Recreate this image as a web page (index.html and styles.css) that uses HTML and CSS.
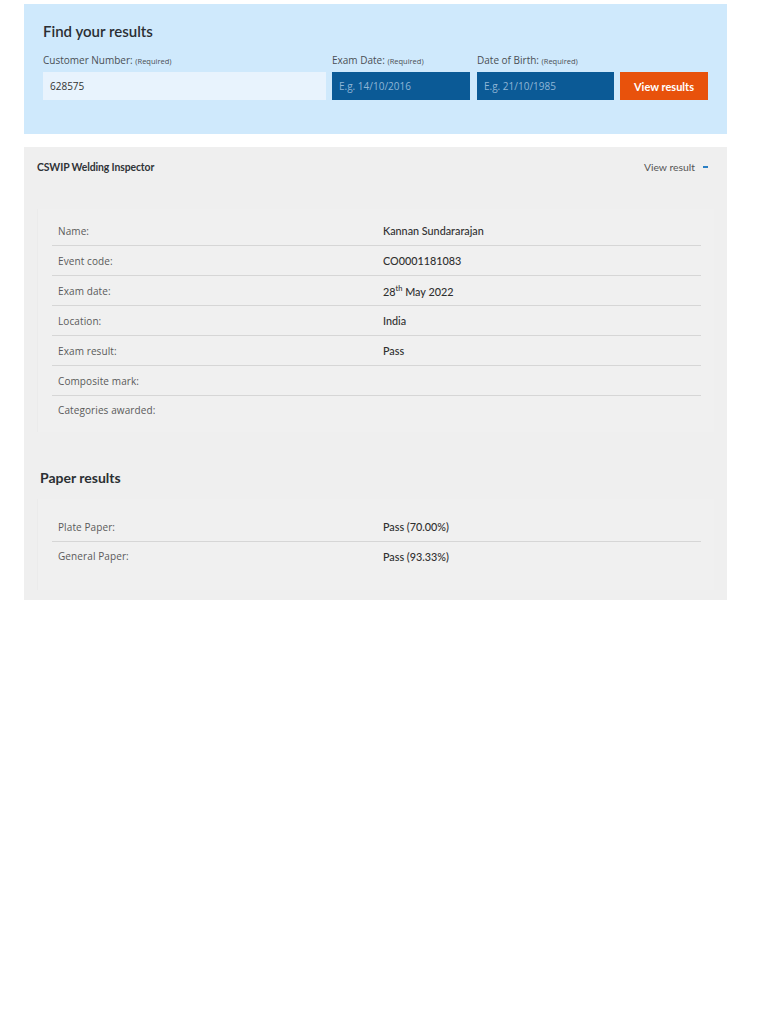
FILE: index.html
```html
<!DOCTYPE html>
<html>
<head>
<meta charset="utf-8">
<link rel="stylesheet" href="styles.css">
</head>
<body>
<div class="page">
  <section class="finder">
    <h1 class="finder-title">Find your results</h1>
    <div class="finder-grid">
      <label class="flabel">Customer Number: <small>(Required)</small></label>
      <label class="flabel">Exam Date: <small>(Required)</small></label>
      <label class="flabel">Date of Birth: <small>(Required)</small></label>
      <span></span>
      <div class="field field-light">628575</div>
      <div class="field field-dark">E.g. 14/10/2016</div>
      <div class="field field-dark">E.g. 21/10/1985</div>
      <button class="btn">View results</button>
    </div>
  </section>

  <section class="result">
    <div class="result-head">
      <span class="result-title">CSWIP Welding Inspector</span>
      <span class="result-toggle">View result <span class="minus"></span></span>
    </div>
    <div class="box box-main">
      <div class="row"><span class="k">Name:</span><span class="v">Kannan Sundararajan</span></div>
      <div class="row"><span class="k">Event code:</span><span class="v">CO0001181083</span></div>
      <div class="row"><span class="k">Exam date:</span><span class="v">28<sup>th</sup> May 2022</span></div>
      <div class="row"><span class="k">Location:</span><span class="v">India</span></div>
      <div class="row"><span class="k">Exam result:</span><span class="v">Pass</span></div>
      <div class="row"><span class="k">Composite mark:</span><span class="v"></span></div>
      <div class="row last"><span class="k">Categories awarded:</span><span class="v"></span></div>
    </div>
    <h2 class="paper-title">Paper results</h2>
    <div class="box box-paper">
      <div class="row"><span class="k">Plate Paper:</span><span class="v">Pass (70.00%)</span></div>
      <div class="row last"><span class="k">General Paper:</span><span class="v">Pass (93.33%)</span></div>
    </div>
  </section>
</div>
</body>
</html>
```

FILE: styles.css
```css
* { box-sizing: border-box; }
html, body { margin: 0; padding: 0; background: #fff; }
body { font-family: "Open Sans", "Liberation Sans", sans-serif; color: #333; }

.page { padding: 4px 41px 0 24px; }

.finder {
  background: #cfe9fc;
  padding: 16px 19px 34px 19px;
}
.finder-title {
  margin: 0;
  font-family: Lato, "Liberation Sans", sans-serif;
  font-weight: 600;
  font-size: 15px;
  line-height: 22px;
  color: #2b2f33;
}
.finder-grid {
  margin-top: 11px;
  display: grid;
  grid-template-columns: 283px 138px 138px 88px;
  column-gap: 6px;
  row-gap: 4px;
}
.finder-grid > :nth-child(4n+3) { margin-left: 1px; }
.flabel {
  font-size: 10px;
  line-height: 14px;
  color: #4a4f55;
}
.flabel small { font-size: 7.5px; }
.field {
  height: 28px;
  line-height: 28px;
  padding: 0 7px;
  font-size: 10px;
}
.field-light { background: #e8f3fd; color: #333; }
.field-dark { background: #0b5a96; color: #8fb6d6; }
.btn {
  height: 28px;
  border: 0;
  background: #e8520c;
  color: #fff;
  font-family: Lato, "Liberation Sans", sans-serif;
  font-weight: 700;
  font-size: 11px;
  padding: 0;
  cursor: pointer;
}

.result {
  margin-top: 13px;
  background: #efefef;
  padding: 12px 13px 10px 13px;
}
.result-head {
  display: flex;
  justify-content: space-between;
  align-items: center;
  height: 16px;
}
.result-title {
  font-family: Lato, "Liberation Sans", sans-serif;
  font-weight: 700;
  font-size: 10.4px;
  color: #2f3337;
  letter-spacing: -0.1px;
}
.result-toggle {
  display: flex;
  align-items: center;
  font-family: Lato, "Liberation Sans", sans-serif;
  font-size: 10.4px;
  color: #555;
  margin-right: 6px;
}
.minus {
  display: inline-block;
  width: 5px;
  height: 2px;
  background: #2a7fc4;
  margin-left: 8px;
}

.box {
  background: #f0f0f0;
  border-left: 1px solid #ebebeb;
  padding: 0 13px 0 14px;
}
.box-main { margin-top: 34px; padding-top: 7px; padding-bottom: 8px; }
.row {
  display: flex;
  align-items: center;
  height: 30px;
  border-bottom: 1px solid #d6d6d6;
  padding-left: 6px;
}
.row.last { border-bottom: 0; height: 28px; }
.k {
  width: 325px;
  flex: none;
  font-size: 10px;
  color: #5a5a5a;
  letter-spacing: 0.1px;
}
.v {
  font-family: Lato, "Liberation Sans", sans-serif;
  font-size: 10.8px;
  font-weight: 500;
  color: #2f2f2f;
}
.v sup { font-size: 7.5px; }

.paper-title {
  margin: 37px 0 0 3px;
  font-family: Lato, "Liberation Sans", sans-serif;
  font-weight: 700;
  font-size: 14px;
  line-height: 18px;
  color: #2b2f33;
}
.box-paper { margin-top: 12px; padding-top: 13px; padding-bottom: 20px; }
```
